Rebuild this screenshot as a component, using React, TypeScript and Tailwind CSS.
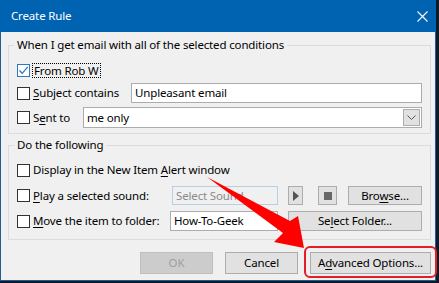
import React from "react";

const Check = ({ checked = false }: { checked?: boolean }) => (
  <span
    className={
      checked
        ? "flex h-[13px] w-[13px] shrink-0 items-center justify-center border border-[#2f79c4] bg-white"
        : "h-[13px] w-[13px] shrink-0 border border-[#333333] bg-white"
    }
  >
    {checked && (
      <svg width="11" height="11" viewBox="0 0 11 11">
        <path d="M1.5 5.5 L4.2 8.3 L9.8 1.8" fill="none" stroke="#2f79c4" strokeWidth="1.3" />
      </svg>
    )}
  </span>
);

const U = ({ children }: { children: React.ReactNode }) => <span className="underline underline-offset-2">{children}</span>;

const Btn = ({ className, children }: { className: string; children: React.ReactNode }) => (
  <div className={"flex shrink-0 items-center justify-center border border-[#adadad] bg-[#e1e1e1] text-black " + className}>
    {children}
  </div>
);

export default function App() {
  return (
    <div className="relative h-[283px] w-[439px] overflow-hidden bg-[#0e1a28] font-['Noto_Sans',sans-serif] text-[11.5px] tracking-[-0.15px] text-black">
      <div className="flex h-[281px] w-[436px] flex-col border-x border-b border-[#1f5c99] bg-[#f0f0f0]">
        {/* title bar */}
        <div className="-mx-px flex h-[32px] shrink-0 items-center justify-between bg-[#0063b1] pl-[11px] pr-[8px] text-white">
          <span className="leading-[16px]">Create Rule</span>
          <svg width="11" height="11" viewBox="0 0 11 11">
            <path d="M0.5 0.5 L10.5 10.5 M10.5 0.5 L0.5 10.5" stroke="white" strokeWidth="1.1" />
          </svg>
        </div>

        {/* group 1 */}
        <fieldset className="ml-[7px] mt-[5px] w-[423px] border border-[#dcdcdc] pb-[5px] pl-[8px] pr-[8px] pt-[9px]">
          <legend className="-ml-[3px] px-[3px] leading-[16px]">When I get email with all of the selected conditions</legend>
          <div className="flex h-[16px] items-center">
            <Check checked />
            <span className="ml-[2px] border border-dotted border-black px-px leading-[13px]">From Rob W</span>
          </div>
          <div className="mt-[5px] flex h-[20px] items-center">
            <Check />
            <span className="ml-[3px] w-[98px] shrink-0">
              <U>S</U>ubject contains
            </span>
            <div className="flex h-[20px] flex-1 items-center border border-[#acacac] bg-white pl-[3px]">Unpleasant email</div>
          </div>
          <div className="mt-[4px] flex h-[21px] items-center">
            <Check />
            <span className="ml-[3px] w-[50px] shrink-0">
              S<U>e</U>nt to
            </span>
            <div className="flex h-[21px] flex-1 items-center justify-between border border-[#acacac] bg-white pl-[3px] pr-px">
              <span>me only</span>
              <div className="flex h-[17px] w-[17px] items-center justify-center border border-[#adadad] bg-[#e1e1e1]">
                <svg width="9" height="5" viewBox="0 0 9 5">
                  <path d="M0.5 0.5 L4.5 4.5 L8.5 0.5" fill="none" stroke="#555" strokeWidth="1" />
                </svg>
              </div>
            </div>
          </div>
        </fieldset>

        {/* group 2 */}
        <fieldset className="ml-[7px] mt-[3px] w-[423px] border border-[#dcdcdc] pb-[8px] pl-[8px] pr-[8px] pt-[9px]">
          <legend className="-ml-[3px] px-[3px] leading-[16px]">Do the following</legend>
          <div className="flex h-[16px] items-center">
            <Check />
            <span className="ml-[3px]">
              Display in the New Item <U>A</U>lert window
            </span>
          </div>
          <div className="mt-[8px] flex h-[19px] items-center">
            <Check />
            <span className="ml-[3px] w-[139px] shrink-0">
              <U>P</U>lay a selected sound:
            </span>
            <div className="flex h-[19px] w-[106px] shrink-0 items-center border border-[#b9cde3] bg-[#f0f0f0] pl-[3px] text-[#8a8a8a]">
              Select Sound
            </div>
            <Btn className="ml-[10px] h-[19px] w-[15px]">
              <svg width="6" height="10" viewBox="0 0 6 10">
                <path d="M0 0 L6 5 L0 10 Z" fill="#555" />
              </svg>
            </Btn>
            <Btn className="ml-[15px] h-[19px] w-[19px]">
              <span className="h-[8px] w-[8px] bg-[#666]" />
            </Btn>
            <Btn className="ml-[11px] h-[19px] w-[74px]">
              <span>
                Bro<U>w</U>se...
              </span>
            </Btn>
          </div>
          <div className="mt-[6px] flex h-[20px] items-center">
            <Check />
            <span className="ml-[3px] w-[137px] shrink-0">
              <U>M</U>ove the item to folder:
            </span>
            <div className="flex h-[20px] w-[108px] shrink-0 items-center border border-[#acacac] bg-white pl-[3px]">How-To-Geek</div>
            <Btn className="ml-[10px] h-[20px] w-[134px]">
              <span>
                Se<U>l</U>ect Folder...
              </span>
            </Btn>
          </div>
        </fieldset>

        {/* buttons */}
        <div className="mt-[12px] flex justify-end gap-[12px] pr-[4px]">
          <div className="flex h-[22px] w-[73px] items-center justify-center border border-[#bfbfbf] bg-[#cccccc] text-[#a0a0a0]">OK</div>
          <Btn className="h-[22px] w-[73px]">Cancel</Btn>
          <Btn className="h-[22px] w-[121px] border-[#6e6e6e]">
            <span>
              A<U>d</U>vanced Options...
            </span>
          </Btn>
        </div>
      </div>

      {/* annotations */}
      <div className="absolute left-[304px] top-[246px] h-[32px] w-[133px] rounded-[6px] border-2 border-[#e41e26]" />
      <svg className="absolute left-0 top-0" width="439" height="283" viewBox="0 0 439 283">
        <polygon points="207,177 290,221 298,216 304,248 274,242 283,233" fill="#ff0000" />
      </svg>
    </div>
  );
}
